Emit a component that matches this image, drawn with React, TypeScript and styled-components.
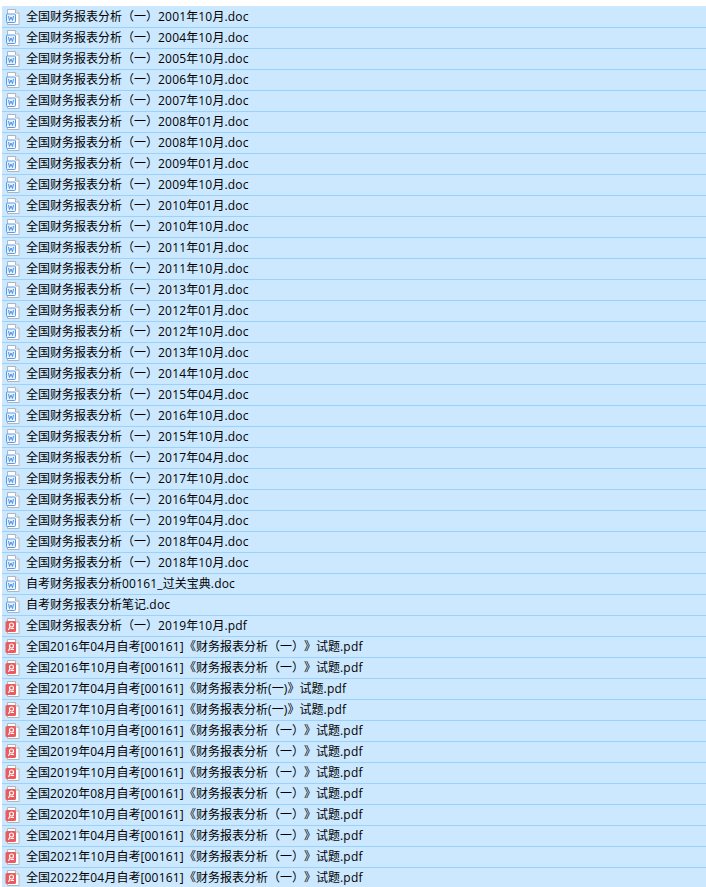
import React from "react";
import styled, { createGlobalStyle } from "styled-components";

const Global = createGlobalStyle`
  html, body { margin: 0; padding: 0; background: #fff; }
  body { font-family: "Open Sans", "Noto Sans CJK SC", sans-serif; }
`;

const List = styled.div`
  width: 706px;
  height: 887px;
  overflow: hidden;
  padding: 6px 0 0 2px;
  box-sizing: border-box;
`;

const Row = styled.div`
  height: 20px;
  background: #cce8ff;
  border-bottom: 1px solid #99d1ff;
  display: flex;
  align-items: center;
  gap: 6px;
  padding-left: 2px;
  white-space: nowrap;
  &:first-child { border-top: 1px solid #cce8ff; }
`;

const Name = styled.span`
  line-height: 20px;
  font-size: 12px;
  color: #000;
  text-spacing-trim: space-all;
  font-kerning: none;
`;

const Latin = styled.span`
  letter-spacing: 0.2px;
`;

const IconBox = styled.svg`
  width: 16px;
  height: 16px;
  flex: none;
`;

const DocIcon = () => (
  <IconBox viewBox="0 0 16 16">
    <path d="M3.500.5h8l3.500 3.500v11.500h-11.500z" fill="#fff" stroke="#aeb6bf" />
    <path d="M11.500.5v3.500h3.500" fill="#e8edf2" stroke="#aeb6bf" />
    <rect x="2.500" y="5" width="9" height="8.500" rx="1" fill="#e6f1fc" stroke="#5b9be6" />
    <path d="M4.500 7l1 4.500 1.500-3.500 1.500 3.500 1-4.500" fill="none" stroke="#3f86dc" strokeWidth="0.900" />
  </IconBox>
);

const PdfIcon = () => (
  <IconBox viewBox="0 0 16 16">
    <path d="M3.500.5h8l3.500 3.500v11.500h-11.500z" fill="#fff" stroke="#b4b4b4" />
    <path d="M11.500.5v3.500h3.500" fill="#f0f0f0" stroke="#b4b4b4" />
    <rect x="1.500" y="3" width="10.500" height="11" rx="1.500" fill="#ea5a5e" />
    <circle cx="7.500" cy="7" r="2" fill="none" stroke="#fff" strokeWidth="1.200" />
    <path d="M6 8.500l-1.500 3.500M6.500 10.500h3.500" fill="none" stroke="#fff" strokeWidth="1.100" />
  </IconBox>
);

const t = "全国财务报表分析（一）";
const doc = [
  "2001年10月","2004年10月","2005年10月","2006年10月","2007年10月","2008年01月","2008年10月",
  "2009年01月","2009年10月","2010年01月","2010年10月","2011年01月","2011年10月","2013年01月",
  "2012年01月","2012年10月","2013年10月","2014年10月","2015年04月","2016年10月","2015年10月",
  "2017年04月","2017年10月","2016年04月","2019年04月","2018年04月","2018年10月",
].map((d) => `${t}${d}.doc`);

const p = (d: string) => `全国${d}自考[00161]《财务报表分析（一）》试题.pdf`;
const q = (d: string) => `全国${d}自考[00161]《财务报表分析(一)》试题.pdf`;

const files = [
  ...doc,
  "自考财务报表分析00161_过关宝典.doc",
  "自考财务报表分析笔记.doc",
  `${t}2019年10月.pdf`,
  p("2016年04月"), p("2016年10月"), q("2017年04月"), q("2017年10月"),
  p("2018年10月"), p("2019年04月"), p("2019年10月"), p("2020年08月"),
  p("2020年10月"), p("2021年04月"), p("2021年10月"), p("2022年04月"),
];

const runs = (s: string) =>
  s.split(/([\x00-\x7f]+)/).map((part, i) =>
    i % 2 ? <Latin key={i}>{part}</Latin> : part
  );

export default function App() {
  return (
    <>
      <Global />
      <List>
        {files.map((f, i) => (
          <Row key={i}>
            {f.endsWith(".doc") ? <DocIcon /> : <PdfIcon />}
            <Name>{runs(f)}</Name>
          </Row>
        ))}
      </List>
    </>
  );
}
